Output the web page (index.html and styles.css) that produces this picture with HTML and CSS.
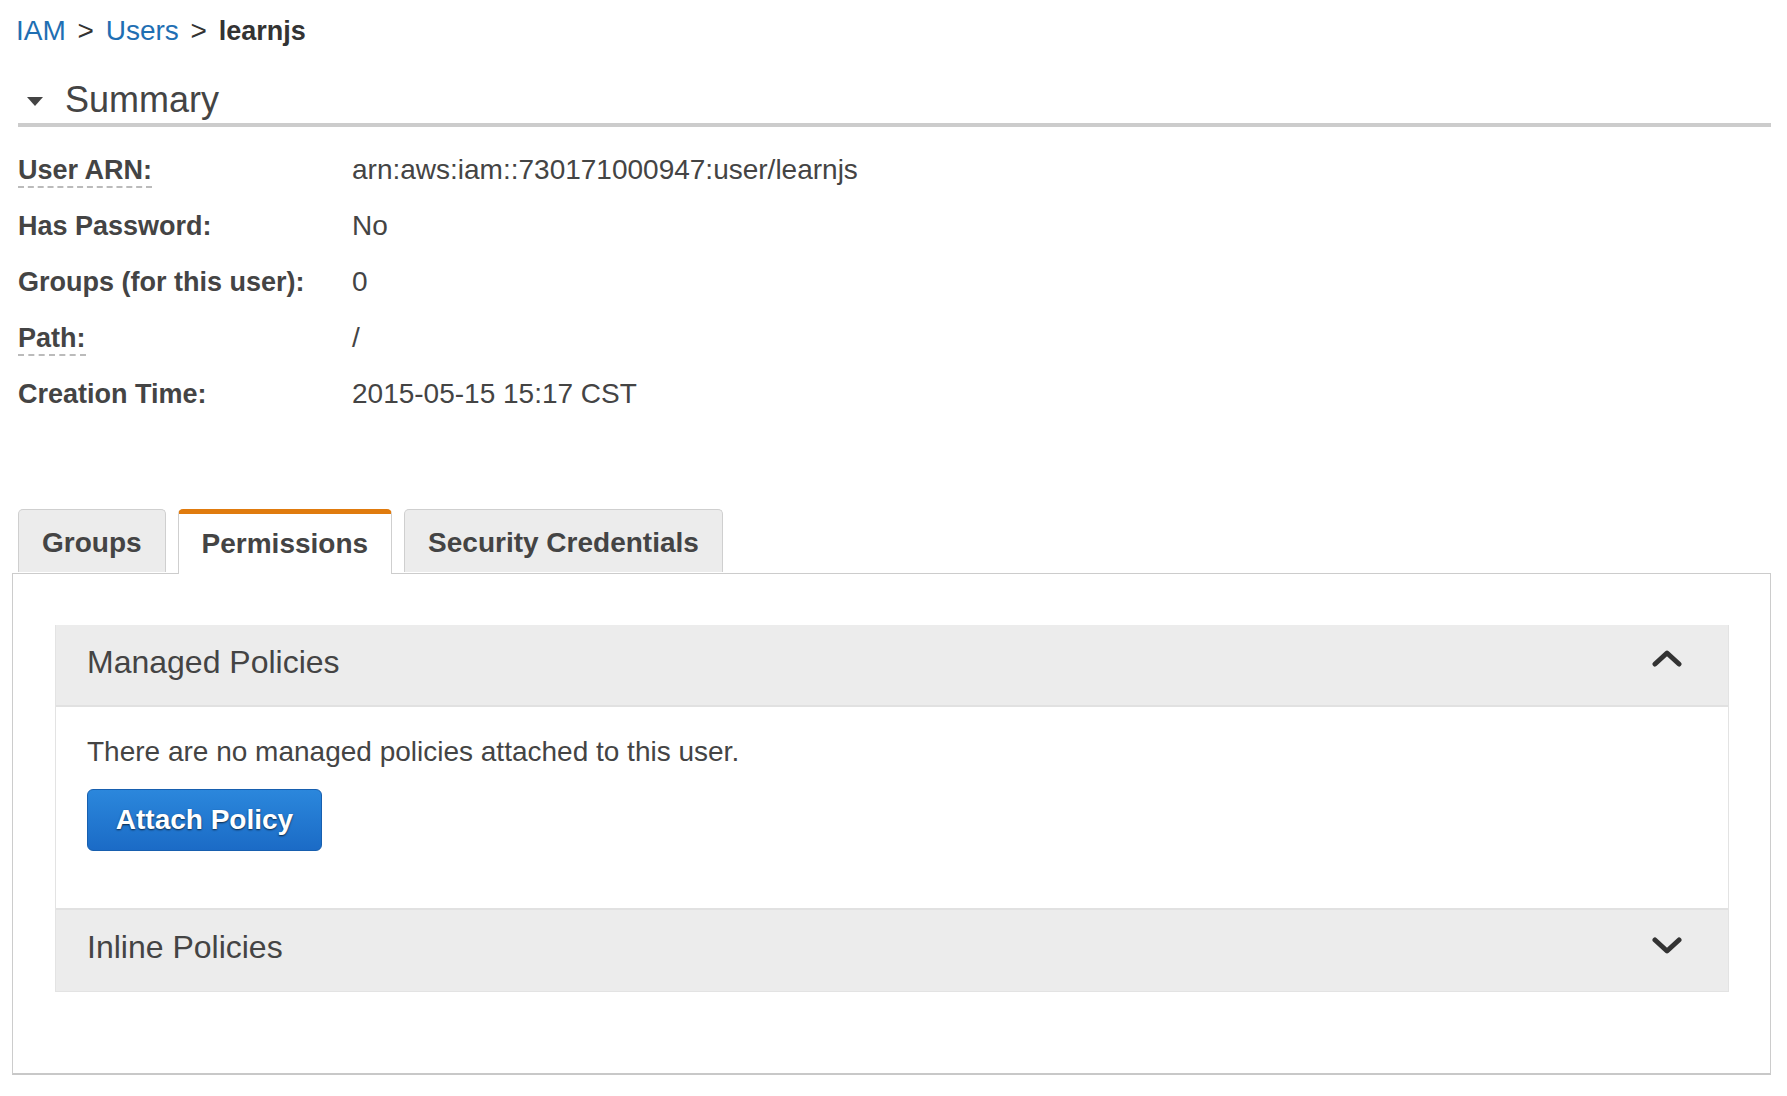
FILE: index.html
```html
<!DOCTYPE html>
<html lang="en">
<head>
    <meta charset="UTF-8" />
    <title>IAM - learnjs</title>
    <link rel="stylesheet" href="styles.css">
</head>
<body>
    <div class="page">
      <div class="breadcrumb">
        <a href="#">IAM</a>
        <span class="sep">&gt;</span>
        <a href="#">Users</a>
        <span class="sep">&gt;</span>
        <strong>learnjs</strong>
      </div>

      <h2 class="summary-title"><span class="caret"></span>Summary</h2>

      <div class="summary">
        <div class="label"><span class="hint">User ARN:</span></div>
        <div class="value">arn:aws:iam::730171000947:user/learnjs</div>
        <div class="label">Has Password:</div>
        <div class="value">No</div>
        <div class="label">Groups (for this user):</div>
        <div class="value">0</div>
        <div class="label"><span class="hint">Path:</span></div>
        <div class="value">/</div>
        <div class="label">Creation Time:</div>
        <div class="value">2015-05-15 15:17 CST</div>
      </div>

      <ul class="tabs">
        <li class="tab">Groups</li>
        <li class="tab active">Permissions</li>
        <li class="tab">Security Credentials</li>
      </ul>

      <div class="tab-panel">
        <div class="accordion">
          <div class="acc-head">
            <span>Managed Policies</span>
            <svg class="chevron" width="30" height="20" viewBox="0 0 30 20">
              <polyline points="3,15 15,4 27,15" />
            </svg>
          </div>
          <div class="acc-body">
            <p>There are no managed policies attached to this user.</p>
            <button class="btn-primary">Attach Policy</button>
          </div>
          <div class="acc-head last">
            <span>Inline Policies</span>
            <svg class="chevron" width="30" height="20" viewBox="0 0 30 20">
              <polyline points="3,5 15,16 27,5" />
            </svg>
          </div>
        </div>
      </div>
    </div>
</body>
</html>
```

FILE: styles.css
```css
body {
    margin: 0;
    font-family: "Liberation Sans", Arial, sans-serif;
    color: #444;
    background-color: #ffffff;
}

.page {
    padding: 15px 16px 0 12px;
}

.breadcrumb {
    margin-left: 4px;
    font-size: 28px;
    line-height: 32px;
    color: #333;
}

.breadcrumb a {
    color: #1f6fb3;
    text-decoration: none;
}

.breadcrumb .sep {
    margin: 0 4px;
}

.breadcrumb strong {
    color: #333;
    font-size: 27px;
}

.summary-title {
    margin: 30px 0 0 6px;
    font-size: 36px;
    line-height: 46px;
    font-weight: normal;
    color: #444;
    border-bottom: 4px solid #cccccc;
    display: flex;
    align-items: center;
}

.caret {
    width: 0;
    height: 0;
    margin: 2px 22px 0 9px;
    border-left: 8px solid transparent;
    border-right: 8px solid transparent;
    border-top: 9px solid #444;
}

.summary {
    margin: 15px 0 0 6px;
    display: grid;
    grid-template-columns: 334px 1fr;
    grid-auto-rows: 56px;
    align-items: center;
}

.label {
    font-size: 27px;
    font-weight: bold;
    color: #444;
}

.hint {
    border-bottom: 2px dashed #bbb;
    padding-bottom: 1px;
}

.value {
    font-size: 28px;
    color: #444;
}

.tabs {
    list-style: none;
    margin: 87px 0 0 6px;
    padding: 0;
    display: flex;
    gap: 12px;
    position: relative;
    z-index: 1;
}

.tab {
    height: 63px;
    box-sizing: border-box;
    padding: 4px 23px 0;
    display: flex;
    align-items: center;
    font-size: 28px;
    font-weight: bold;
    color: #444;
    background-color: #ececec;
    border: 1px solid #cfcfcf;
    border-bottom: none;
    border-radius: 5px 5px 0 0;
}

.tab.active {
    height: 65px;
    margin-bottom: -1px;
    background-color: #ffffff;
    border-top: 5px solid #e07b0e;
    padding-top: 0;
}

.tab-panel {
    border: 1px solid #cccccc;
    border-bottom: 2px solid #c8c8c8;
    height: 502px;
    box-sizing: border-box;
    padding: 51px 41px 0 42px;
}

.accordion {
    border: 1px solid #e3e3e3;
    border-top: none;
}

.acc-head {
    height: 82px;
    box-sizing: border-box;
    padding: 0 46px 6px 31px;
    background-color: #ececec;
    border-bottom: 2px solid #e1e1e1;
    display: flex;
    align-items: center;
    justify-content: space-between;
    font-size: 32px;
    color: #444;
}

.acc-head.last {
    height: 83px;
    border-bottom: none;
    border-top: 2px solid #e1e1e1;
}

.chevron {
    margin-top: -6px;
}

.chevron polyline {
    fill: none;
    stroke: #333;
    stroke-width: 5;
    stroke-linecap: round;
    stroke-linejoin: round;
}

.acc-body {
    padding: 27px 31px 57px;
}

.acc-body p {
    margin: 0;
    font-size: 28px;
    line-height: 36px;
    color: #444;
}

.btn-primary {
    margin-top: 19px;
    width: 235px;
    height: 62px;
    border: 1px solid #175faf;
    border-radius: 6px;
    background: linear-gradient(#2b87dc 0%, #1b6bc6 100%);
    color: white;
    font-family: "Liberation Sans", Arial, sans-serif;
    font-size: 28px;
    font-weight: bold;
    text-shadow: 0 1px 2px rgba(0, 0, 0, 0.7);
    cursor: pointer;
}
```
